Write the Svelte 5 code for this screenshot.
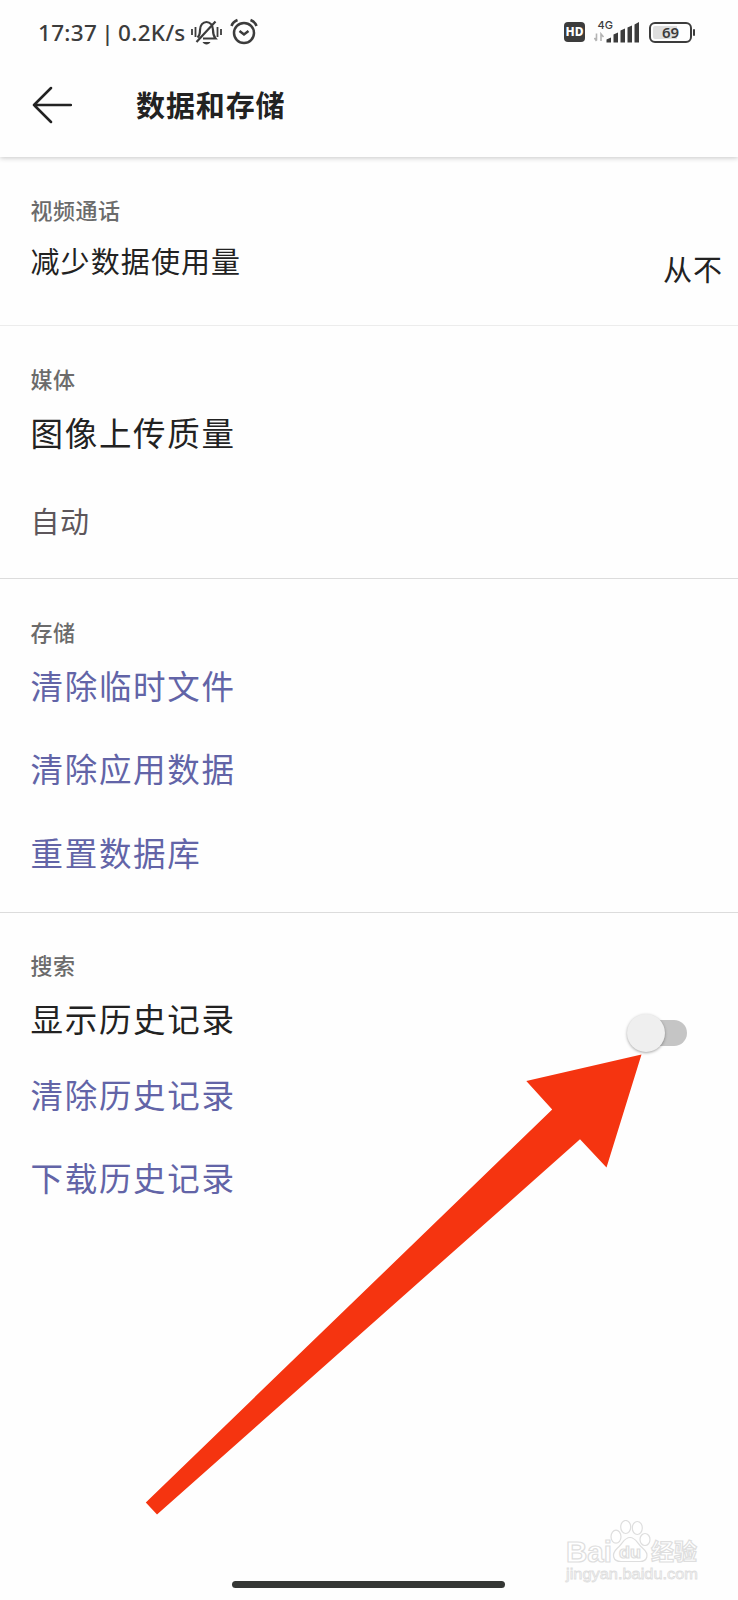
<script>
  let showHistory = $state(false);
</script>

<div class="screen">
  <div class="status">
    <span class="clock">17:37 | 0.2K/s</span>
    <svg class="bell" width="32" height="30" viewBox="0 0 32 30" fill="none" stroke="#3c3c3c" stroke-width="2.200">
      <path d="M7.500 20.500c2.500-2 2.500-4 2.500-7.500 0-5 3-8 6.500-8s6.500 3 6.500 8c0 3.500 0 5.500 2.500 8.500H13M25.500 4.500 6.500 25" />
      <path d="M2 12v6M5.500 10v10M27.500 10v10M31 12v6" stroke-width="1.800" />
      <path d="M12.500 25h8c-1.500 3.200-6.500 3.200-8 0z" fill="#3c3c3c" stroke="none" />
    </svg>
    <svg class="alarm" width="28" height="28" viewBox="0 0 28 28" fill="none" stroke="#3c3c3c" stroke-width="2.500">
      <circle cx="14" cy="15" r="10" />
      <path d="m9.500 13 4.500 3.500 4.500-3.500" />
      <path d="M1.500 8c1-3 3-4.800 6-6M26.500 8c-1-3-3-4.800-6-6" stroke-width="2.600" />
    </svg>
    <span class="grow"></span>
    <span class="hd">HD</span>
    <svg class="signal" width="46" height="28" viewBox="0 0 46 28">
      <text x="3.500" y="10.500" font-size="11" font-weight="500" font-family="Inter, sans-serif" fill="#3c3c3c">4G</text>
      <path d="M2.500 15.500v7M.5 20l2 3M7 23v-7l2.500 3" fill="none" stroke="#b4b4b4" stroke-width="1.600" />
      <path d="M12.500 24.500v-3l4.500-2v5zM19.500 24.500v-8l4.500-2v10zM26.500 24.500v-12l4.500-2v14zM33.500 24.500V9.500L38 7.500v17zM40.500 24.500v-18L45 4v20.500z" fill="#3c3c3c" />
    </svg>
    <span class="battery"><span class="level">69</span></span>
    <span class="cap"></span>
  </div>

  <header>
    <svg width="40" height="38" viewBox="0 0 40 38" fill="none" stroke="#222" stroke-width="2.500" stroke-linecap="round" stroke-linejoin="round">
      <path d="M19 2 2 19l17 17M2 19h37" />
    </svg>
    <h1>数据和存储</h1>
  </header>

  <main>
    <section class="calls">
      <div>
        <h2>视频通话</h2>
        <p class="item medium">减少数据使用量</p>
      </div>
      <span class="value">从不</span>
    </section>

    <section class="media">
      <h2>媒体</h2>
      <p class="item">图像上传质量</p>
      <p class="choice">自动</p>
    </section>

    <section class="storage">
      <h2>存储</h2>
      <p class="item link">清除临时文件</p>
      <p class="item link">清除应用数据</p>
      <p class="item link">重置数据库</p>
    </section>

    <section class="search">
      <h2>搜索</h2>
      <div class="history">
        <p class="item">显示历史记录</p>
        <button class="toggle" class:on={showHistory} aria-label="显示历史记录" onclick={() => (showHistory = !showHistory)}>
          <span class="track"></span><span class="thumb"></span>
        </button>
      </div>
      <p class="item link">清除历史记录</p>
      <p class="item link">下载历史记录</p>
    </section>
  </main>

  <svg class="pointer" width="738" height="1600" viewBox="0 0 738 1600">
    <path d="M641.500 1054.500 606.500 1167.500 580 1139.300 157 1514.500 145.800 1502.500 552.200 1109.500 526.300 1081z" fill="#f53410" />
  </svg>

  <svg class="mark" width="150" height="70" viewBox="0 0 150 70" fill="#fff" stroke="#dedede" stroke-width="1.200">
    <g font-family="'Liberation Sans', sans-serif" font-weight="700">
      <text x="10" y="41.500" font-size="29" textLength="46" lengthAdjust="spacingAndGlyphs">Bai</text>
      <ellipse cx="60" cy="16.700" rx="5" ry="6.500" /><ellipse cx="69.700" cy="7" rx="5" ry="6.500" />
      <ellipse cx="81.300" cy="8" rx="5" ry="6.500" /><ellipse cx="89" cy="19.500" rx="5" ry="6" />
      <path d="M74 17.500c6 0 7 6 13 11 7 6 4 13-3 13H65c-8 0-10-7-4-13 6-5 7-11 13-11z" />
      <text x="63" y="38" font-size="17" textLength="22" lengthAdjust="spacingAndGlyphs">du</text>
      <text x="95" y="40" font-size="23" textLength="46" lengthAdjust="spacingAndGlyphs" font-family="'Noto Sans CJK SC', sans-serif">经验</text>
    </g>
    <text x="10" y="59" font-size="14.500" stroke-width=".8" textLength="132" lengthAdjust="spacingAndGlyphs" font-family="'Liberation Sans', sans-serif">jingyan.baidu.com</text>
  </svg>
  <div class="home"></div>
</div>

<style>
  :global(body) { margin: 0; background: #fefefe; }
  .screen {
    position: relative;
    box-sizing: border-box;
    width: 738px;
    height: 1600px;
    overflow: hidden;
    background: #fefefe;
    color: #222;
    font-family: "Noto Sans CJK SC", sans-serif;
  }
  h1, h2, p { margin: 0; }
  .status {
    display: flex;
    align-items: center;
    box-sizing: border-box;
    height: 64px;
    padding: 0 43px 0 38px;
    color: #3c3c3c;
  }
  .clock {
    width: 152px;
    padding-top: 1px;
    font: 500 22.500px/30px "Noto Sans", sans-serif;
    letter-spacing: .3px;
    word-spacing: -2px;
    white-space: pre;
  }
  .bell { flex: none; }
  .alarm { flex: none; margin-left: 8px; }
  .grow { flex: 1; }
  .hd {
    width: 21px;
    height: 20px;
    border-radius: 4px;
    background: #3c3c3c;
    color: #fff;
    text-align: center;
    font: 800 12px/20px "Noto Sans", sans-serif;
  }
  .signal { margin: 0 9px; }
  .battery {
    box-sizing: border-box;
    width: 43px;
    height: 21px;
    padding: 2px;
    border: 2.500px solid #3c3c3c;
    border-radius: 6px;
  }
  .level {
    display: block;
    height: 13px;
    border-radius: 2px;
    background: linear-gradient(90deg, #dedede 69%, transparent 69%);
    text-align: center;
    font: 600 15px/13px "Noto Sans", sans-serif;
  }
  .cap { width: 2px; height: 7px; margin-left: 1px; border-radius: 1px; background: #3c3c3c; }
  header {
    display: flex;
    align-items: center;
    box-sizing: border-box;
    height: 93px;
    padding: 0 32px 11px;
    box-shadow: 0 1px 5px rgba(0, 0, 0, .22);
    clip-path: inset(0 0 -12px 0);
  }
  h1 {
    margin: -2px 0 0 64px;
    font-size: 29px;
    line-height: 40px;
    font-weight: 700;
    letter-spacing: .9px;
  }
  section {
    box-sizing: border-box;
    padding: 37px 15px 0 30.500px;
    border-bottom: 1px solid #dcdcdc;
  }
  h2 {
    color: #6b6b6b;
    font-size: 22px;
    line-height: 30px;
    font-weight: 500;
    letter-spacing: .5px;
  }
  .item {
    font-size: 32.500px;
    line-height: 48px;
    letter-spacing: 1.700px;
  }
  .medium { margin-top: 12px; font-size: 29px; letter-spacing: 1.100px; }
  .link { color: #6264a7; }
  .calls { display: flex; justify-content: space-between; height: 169px; border-color: #ececec; }
  .value { margin-top: 50px; font-size: 29px; line-height: 48px; letter-spacing: 1px; }
  .media { height: 253px; }
  .media .item { margin-top: 15px; }
  .choice { margin-top: 44px; color: #5d565b; font-size: 29px; line-height: 40px; letter-spacing: .6px; }
  .storage { height: 334px; }
  .storage .item { margin-top: 35.500px; }
  .storage h2 + .item { margin-top: 14.500px; }
  .search { padding-top: 36px; border: 0; }
  .history { display: flex; align-items: flex-start; justify-content: space-between; height: 60px; margin-top: 15px; padding-right: 36px; }
  .search .link { margin-top: 16px; }
  .search .link + .link { margin-top: 35px; }
  .toggle {
    display: grid;
    align-items: center;
    width: 60px;
    height: 40px;
    margin-top: 19px;
    padding: 0;
    border: 0;
    background: none;
  }
  .track, .thumb { grid-area: 1 / 1; }
  .track { width: 50px; height: 26px; margin-left: 10px; border-radius: 13px; background: #c5c5c5; }
  .thumb {
    width: 38px;
    height: 38px;
    border-radius: 50%;
    background: #efefef;
    box-shadow: 0 1px 3px rgba(0, 0, 0, .35);
  }
  .on .thumb { justify-self: end; background: #6264a7; }
  .pointer { position: absolute; top: 0; left: 0; pointer-events: none; }
  .mark { position: absolute; right: 32px; bottom: 10px; }
  .home {
    position: absolute;
    bottom: 12px;
    left: 232px;
    width: 273px;
    height: 7px;
    border-radius: 4px;
    background: #353735;
  }
</style>
